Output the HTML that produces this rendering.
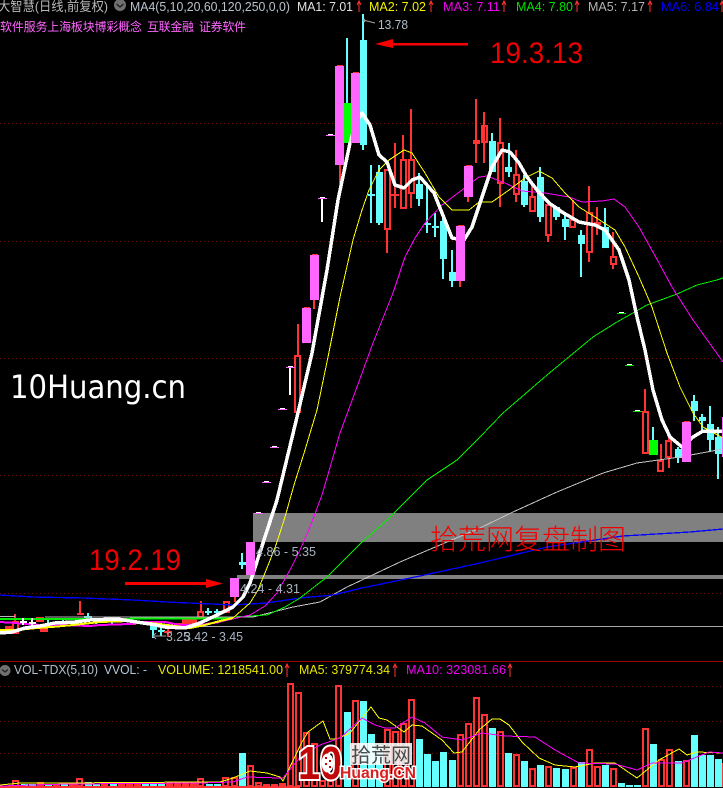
<!DOCTYPE html>
<html><head><meta charset="utf-8"><style>
html,body{margin:0;padding:0;background:#000;width:723px;height:788px;overflow:hidden}
svg{display:block}
text{font-family:"Liberation Sans","Noto Sans CJK SC",sans-serif}
</style></head><body>
<svg width="723" height="788" viewBox="0 0 723 788" xmlns="http://www.w3.org/2000/svg">
<rect width="723" height="788" fill="#000"/>
<!-- grid -->
<g stroke="#6e1414" stroke-width="1" stroke-dasharray="1 3" shape-rendering="crispEdges">
<path d="M0 123.5H723M0 241.5H723M0 358.5H723M0 475.5H723M0 593.5H723M0 686.5H723M0 721.5H723M0 753.5H723"/>
</g>
<!-- bands -->
<rect x="253" y="513" width="470" height="29" fill="#808080"/>
<rect x="237" y="575" width="486" height="4" fill="#808080"/>
<rect x="197" y="626" width="526" height="1" fill="#a8a8a8"/>
<rect x="0" y="661" width="723" height="1" fill="#a00000"/>

<g shape-rendering="crispEdges">
<!-- cyan wicks -->
<path fill="none" stroke="#66ffff" stroke-width="2" d="M347 38V103M363 14V150M371 165V223M379 165V225M419 173V206M427 187V233M435 213V237M443 216V279M452 250V287M492 133V172M509 143V177M524 175V207M540 167V222M556 207V220M565 215V240M581 230V277M605 208V248M653 427V440M678 447V463M694 395V421M702 414V433M710 406V452M718 427V479M242 553V569M48 619V625M63 618V622M88 613V618M96 620V624M112 620V624M153 630V638M161 626V636M208 608V615M217 609V615"/>
<!-- cyan bodies -->
<path fill="#66ffff" d="M360 40h7v105h-7zM368 194h7v2h-7zM376 172h7v51h-7zM416 184h7v15h-7zM424 223h7v2h-7zM432 226h7v2h-7zM440 221h7v38h-7zM449 272h7v9h-7zM489 141h7v31h-7zM505 167h7v5h-7zM521 181h7v24h-7zM537 177h7v40h-7zM553 207h7v10h-7zM562 219h7v8h-7zM578 235h7v9h-7zM602 227h7v21h-7zM675 449h7v9h-7zM691 401h7v10h-7zM699 417h7v4h-7zM707 424h7v16h-7zM715 437h7v17h-7zM239 562h7v3h-7zM150 625h7v5h-7zM158 630h7v2h-7zM205 611h7v2h-7zM214 611h7v2h-7zM84 616h8v2h-8z"/>
<rect x="649" y="440" width="9" height="15" fill="#00ff00"/>
<rect x="343" y="103" width="9" height="40" fill="#00ff00"/>
<!-- red wicks -->
<path fill="none" stroke="#ff3333" stroke-width="2" d="M340 165V183M387 230V253M395 143V208M403 135V160M411 109V160M411 193V208M476 99V163M484 112V163M500 118V143M500 183V207M516 150V175M516 194V202M532 185V197M548 235V242M573 200V220M589 186V213M589 252V262M597 207V235M613 232V257M613 264V269M645 389V411M661 444V460M669 437V440M669 458V468M298 324V355M314 300V309M460 281V287M468 197V202M235 597V602M15 614V621M80 601V615M168 628V637M201 601V611"/>
<!-- red hollow bodies -->
<path fill="none" stroke="#ff3333" stroke-width="2" d="M385 170h5V229h-5zM401 160h5V208h-5zM409 160h5V193h-5zM474 141h5v2h-5zM482 126h5V142h-5zM498 143h5V183h-5zM514 175h5V194h-5zM530 197h5V211h-5zM546 205h5V235h-5zM570 220h5V227h-5zM587 213h5V252h-5zM611 257h5V264h-5zM643 412h5V453h-5zM658 461h5V471h-5zM666 441h5V457h-5zM295 356h5V412h-5zM13 622h5V633h-5zM198 612h5V617h-5zM224 602h5V612h-5z"/>
<path fill="#ff3333" d="M391 194h8v2h-8zM594 222h7v3h-7zM77 613h7v2h-7zM164 631h8v2h-8zM182 618h15v9h-15zM175 623h7v4h-7zM36 617h8v5h-8zM52 623h8v2h-8zM5 626h8v4h-8zM40 625h8v7h-8zM144 623h8v2h-8zM128 623h8v2h-8z"/>
<!-- dashes -->
<path fill="#ff66ff" d="M262 482h9v1h-9zM270 447h9v1h-9zM278 409h9v1h-9zM286 367h9v1h-9zM318 198h9v1h-9zM326 135h9v1h-9zM254 513h9v1h-9z"/>
<path fill="#00e000" d="M617 313h9v1h-9zM625 365h9v1h-9zM633 411h9v1h-9z"/>
<path fill="#fff" d="M264 481h5v1h-5zM272 446h5v1h-5zM280 408h5v1h-5zM288 366h5v1h-5zM320 197h5v1h-5zM328 134h5v1h-5zM256 512h5v1h-5zM619 312h5v1h-5zM627 364h5v1h-5zM635 410h5v1h-5zM289 368h2v27h-2zM321 199h2v23h-2z"/>

<!-- left thin bands -->
<path fill="none" stroke="#b8b8b8" d="M0 616.5H15M45 617H253"/>
<path fill="none" stroke="#00f000" stroke-width="2" d="M0 619H130M130 618.5H233"/>
<!-- MA5 gray -->
<path fill="none" stroke="#c4c4c4" d="M253 617L293 607L320 602L347 587L362 580L400 562L440 545L480 528L513 512L557 492L603 473L637 463L680 457L723 449"/>
<!-- MA6 blue -->
<path fill="none" stroke="#0000ff" stroke-width="1.3" d="M0 595L33 597L83 598L133 600L167 602L233 605L267 603L300 598L333 595L362 588L420 576L480 563L547 547L623 536L690 532L723 529"/>
<!-- MA4 green -->
<path fill="none" stroke="#00f000" d="M233 617L267 615L285 607L300 598L327 577L347 557L362 542L385 522L407 500L427 480L457 460L480 437L503 413L547 375L593 337L617 322L647 305L677 294L697 285L717 280L723 278"/>
<!-- MA3 magenta -->
<path fill="none" stroke="#ff00ff" d="M220 622L250 615L265 606L277 593L290 570L300 550L310 527L322 495L340 433L357 387L373 343L393 293L405 257L415 238L425 223L442 205L462 190L479 177L487 176L505 183L522 191L545 193L569 197L582 202L602 201L614 199L625 207L639 227L659 263L672 287L693 320L723 362"/>
<path fill="none" stroke="#ff00ff" stroke-width="2" d="M0 622L15 623L40 625L60 625L90 626L100 625L130 624L145 622L165 622L180 625L200 625L220 622"/>
<!-- MA2 yellow -->
<path fill="none" stroke="#ffff00" d="M233 618L250 603L258 590L267 568L276 545L285 517L294 485L305 450L317 410L328 357L340 297L353 240L362 210L369 190L379 170L389 160L404 150L412 153L425 173L439 197L452 210L469 210L479 202L492 202L509 190L525 178L539 171L552 178L565 193L579 207L595 217L615 230L625 247L639 277L652 307L667 353L680 387L693 413L703 427L723 438"/>
<path fill="none" stroke="#ffff00" stroke-width="2" d="M0 630L17 630L37 628L52 627L73 625L100 622L130 621L160 624L190 628L205 625L220 621L233 618"/>
<!-- MA1 white -->
<path fill="none" stroke="#fff" stroke-width="3.5" stroke-linejoin="round" d="M0 633L12 632L25 628L40 626L55 623L75 622L90 620L117 619L130 621L150 624L165 627L185 628L200 623L217 615L233 607L243 597L250 583L263 543L277 500L297 417L312 353L327 270L338 200L350 143L356 122L362 113L370 125L379 155L387 162L395 185L404 188L412 180L420 177L434 193L442 213L452 238L464 240L472 227L482 197L492 167L502 150L510 152L519 163L527 177L537 190L549 203L562 212L579 222L595 225L605 230L619 250L629 280L637 317L645 350L653 390L662 420L670 437L682 447L693 437L703 431L723 431"/>
<!-- small white crosses far left -->
<path fill="#fff" d="M22 618h2v7h-2zM20 621h7v2h-7zM31 618h2v10h-2zM29 622h7v2h-7z"/>
<!-- pink candles -->
<path fill="#ff66ff" d="M335 66h9v99h-9zM351 73h9v70h-9zM302 308h9v35h-9zM310 255h9v45h-9zM456 226h9v55h-9zM464 166h9v31h-9zM682 422h9v40h-9zM246 542h9v33h-9zM230 578h9v19h-9zM722 417h1v40h-1z"/>
<path fill="#ff3333" d="M337 65h6v1h-6zM353 72h6v1h-6zM304 307h6v1h-6zM312 254h6v1h-6zM458 225h6v1h-6zM466 165h6v1h-6zM684 421h6v1h-6z"/>

<!-- Volume -->
<path fill="#66ffff" d="M21 784h7v3h-7zM29 784h7v3h-7zM45 784h7v3h-7zM61 784h7v3h-7zM85 782h7v5h-7zM93 784h7v3h-7zM110 784h7v3h-7zM142 784h7v3h-7zM150 784h7v3h-7zM158 784h7v3h-7zM206 784h7v3h-7zM214 784h7v3h-7zM239 753h7v34h-7zM344 712h7v75h-7zM360 701h7v86h-7zM368 734h7v53h-7zM376 745h7v42h-7zM416 739h7v48h-7zM424 754h7v33h-7zM432 761h7v26h-7zM440 752h7v35h-7zM449 760h7v27h-7zM489 728h7v59h-7zM505 753h7v34h-7zM521 761h7v26h-7zM537 765h7v22h-7zM553 768h7v19h-7zM562 769h7v18h-7zM578 762h7v25h-7zM602 765h7v22h-7zM618 783h7v4h-7zM626 785h7v2h-7zM634 785h7v2h-7zM650 744h7v43h-7zM675 761h7v26h-7zM691 735h7v52h-7zM699 755h7v32h-7zM707 755h7v32h-7zM715 759h7v28h-7z"/>
<path fill="#ff3333" d="M0 786h300v2h-300zM37 782h7v5h-7zM53 784h7v3h-7zM69 784h7v3h-7zM101 784h7v3h-7zM118 784h7v3h-7zM126 784h7v3h-7zM134 782h7v5h-7zM166 783h7v4h-7zM174 783h7v4h-7zM182 782h7v5h-7zM190 783h7v4h-7zM263 784h7v3h-7zM271 784h7v3h-7zM279 783h7v4h-7z"/>
<path fill="none" stroke="#ff3333" stroke-width="2" d="M13 781h5V786h-5zM77 779h5V786h-5zM198 779h5V786h-5zM223 778h5V786h-5zM232 778h5V786h-5zM248 766h5V786h-5zM256 783h5V786h-5zM288 684h5V786h-5zM296 693h5V786h-5zM304 733h5V786h-5zM312 744h5V786h-5zM320 781h5V786h-5zM328 781h5V786h-5zM336 686h5V786h-5zM353 701h5V786h-5zM385 730h5V786h-5zM393 732h5V786h-5zM401 724h5V786h-5zM409 700h5V786h-5zM458 735h5V786h-5zM466 724h5V786h-5zM474 698h5V786h-5zM482 715h5V786h-5zM498 732h5V786h-5zM514 755h5V786h-5zM530 769h5V786h-5zM546 767h5V786h-5zM571 768h5V786h-5zM587 750h5V786h-5zM595 767h5V786h-5zM611 769h5V786h-5zM643 729h5V786h-5zM659 760h5V786h-5zM667 750h5V786h-5zM684 761h5V786h-5zM723 764h5V786h-5z"/>
<path fill="none" stroke="#ffff00" d="M0 785L20 783L60 783L200 782L220 782L233 778L250 771L267 773L280 777L283 781L287 773L302 742L308 732L323 721L330 739L337 739L350 733L362 718L371 707L379 718L387 720L404 732L412 725L422 726L442 740L454 753L462 752L479 730L492 719L500 719L509 725L522 742L539 758L555 765L575 767L595 763L615 763L637 778L659 760L679 749L687 755L697 752L723 753"/>
<path fill="none" stroke="#ff00ff" d="M0 786L67 784L200 783L233 782L247 777L280 778L283 778L287 773L302 755L320 745L340 738L362 718L375 725L385 728L395 728L412 717L425 723L442 737L462 740L482 733L505 736L535 737L555 750L579 763L615 764L637 770L652 763L682 763L709 752L723 753"/>
</g>

<!-- red arrows -->
<path fill="#f80000" d="M375 44L393 39V43H468V45.5H393V48Z"/>
<path fill="#f80000" d="M125 582H206V579L223 583.5L206 588V585H125Z"/>

<!-- header -->
<text x="-2" y="11" font-size="13" fill="#b9b9b9" textLength="110" lengthAdjust="spacingAndGlyphs">大智慧(日线,前复权)</text>
<circle cx="120" cy="5" r="6" fill="#707070"/><path d="M116.5 4L120 7L123.5 4" fill="none" stroke="#1c1c1c" stroke-width="1.3"/>
<text x="130" y="11" font-size="13" fill="#b9c2cc" textLength="160" lengthAdjust="spacingAndGlyphs">MA4(5,10,20,60,120,250,0,0)</text>
<text x="297" y="11" font-size="13" fill="#e0e0e0" textLength="56" lengthAdjust="spacingAndGlyphs">MA1: 7.01</text>
<text x="369" y="11" font-size="13" fill="#f2f200" textLength="57" lengthAdjust="spacingAndGlyphs">MA2: 7.02</text>
<text x="443" y="11" font-size="13" fill="#f000f0" textLength="57" lengthAdjust="spacingAndGlyphs">MA3: 7.11</text>
<text x="516" y="11" font-size="13" fill="#00e000" textLength="57" lengthAdjust="spacingAndGlyphs">MA4: 7.80</text>
<text x="588" y="11" font-size="13" fill="#b4b4b4" textLength="57" lengthAdjust="spacingAndGlyphs">MA5: 7.17</text>
<text x="661" y="11" font-size="13" fill="#0000ff" textLength="58" lengthAdjust="spacingAndGlyphs">MA6: 6.84</text>
<path fill="none" stroke="#ff3333" d="M359 12V1M357 5L359 1L361 5M431 12V1M429 5L431 1L433 5M504 12V1M502 5L504 1L506 5M577 12V1M575 5L577 1L579 5M650 12V1M648 5L650 1L652 5M722 12V1M720 5L722 1L724 5M287 677V664M285 668L287 664L289 668M395 677V664M393 668L395 664L397 668M510 677V664M508 668L510 664L512 668"/>
<text x="0" y="31" font-size="12" fill="#ff66ff" textLength="142">软件服务上海板块博彩概念</text>
<text x="147" y="31" font-size="12" fill="#ff66ff" textLength="47">互联金融</text>
<text x="199" y="31" font-size="12" fill="#ff66ff" textLength="47">证券软件</text>

<!-- price labels -->
<path fill="none" stroke="#a0a0a0" d="M363 20L375 23M365 19L363 20L365 22"/>
<text x="378" y="29" font-size="13" fill="#aebdcc" textLength="30" lengthAdjust="spacingAndGlyphs">13.78</text>
<text x="256" y="556" font-size="13" fill="#a8b4c0" textLength="60" lengthAdjust="spacingAndGlyphs">4.86 - 5.35</text>
<text x="240" y="593" font-size="13" fill="#a8b4c0" textLength="60" lengthAdjust="spacingAndGlyphs">4.24 - 4.31</text>
<path fill="none" stroke="#a0a0a0" d="M153 636H166M156 633L153 636L156 639"/>
<text x="166" y="641" font-size="13" fill="#a8b4c0" textLength="24" lengthAdjust="spacingAndGlyphs">3.25</text>
<text x="184" y="641" font-size="13" fill="#a8b4c0" textLength="59" lengthAdjust="spacingAndGlyphs">3.42 - 3.45</text>

<!-- annotations -->
<text x="490" y="63" font-size="30" fill="#ee0000" textLength="93" lengthAdjust="spacingAndGlyphs">19.3.13</text>
<text x="89" y="570" font-size="30" fill="#ee0000" textLength="92" lengthAdjust="spacingAndGlyphs">19.2.19</text>
<text x="10" y="398" font-size="32" fill="#fff" style="font-family:'DejaVu Sans',sans-serif" textLength="176" lengthAdjust="spacingAndGlyphs">10Huang.cn</text>
<text x="430" y="549" font-size="28" fill="#f00000" style="font-family:'Noto Sans CJK SC',sans-serif;font-weight:300" textLength="196">拾荒网复盘制图</text>

<!-- volume header -->
<circle cx="5" cy="670.5" r="5.5" fill="#707070"/><path d="M2 669.5L5 672L8 669.5" fill="none" stroke="#1c1c1c" stroke-width="1.2"/>
<text x="14" y="674" font-size="13" fill="#b4c0cc" textLength="84" lengthAdjust="spacingAndGlyphs">VOL-TDX(5,10)</text>
<text x="104" y="674" font-size="13" fill="#b4c8dc" textLength="43" lengthAdjust="spacingAndGlyphs">VVOL: -</text>
<text x="158" y="674" font-size="13" fill="#e6e600" textLength="125" lengthAdjust="spacingAndGlyphs">VOLUME: 1218541.00</text>
<text x="299" y="674" font-size="13" fill="#e6e600" textLength="91" lengthAdjust="spacingAndGlyphs">MA5: 379774.34</text>
<text x="406" y="674" font-size="13" fill="#ee00ee" textLength="100" lengthAdjust="spacingAndGlyphs">MA10: 323081.66</text>

<!-- watermark -->
<rect x="350" y="743" width="62" height="22" fill="#fff" fill-opacity=".88"/>
<text x="351" y="762" font-size="20" fill="#4a4a4a" style="font-family:'Noto Sans CJK SC',sans-serif" textLength="60">拾荒网</text>
<text x="298" y="779" font-size="46" font-weight="bold" fill="#c00606" stroke="#fff" stroke-width="4" paint-order="stroke" textLength="44" lengthAdjust="spacingAndGlyphs">10</text>
<ellipse cx="327.5" cy="763" rx="6" ry="9.5" fill="#fff"/>
<path fill="#c00606" d="M325 757h2v2h-2zM329 760h2v2h-2zM325 763h2v2h-2zM329 766h2v2h-2z"/>
<text x="340" y="778" font-size="16" font-weight="bold" fill="#d82020" stroke="#fff" stroke-width="3" paint-order="stroke" textLength="76" lengthAdjust="spacingAndGlyphs">Huang.CN</text>
</svg>
</body></html>
